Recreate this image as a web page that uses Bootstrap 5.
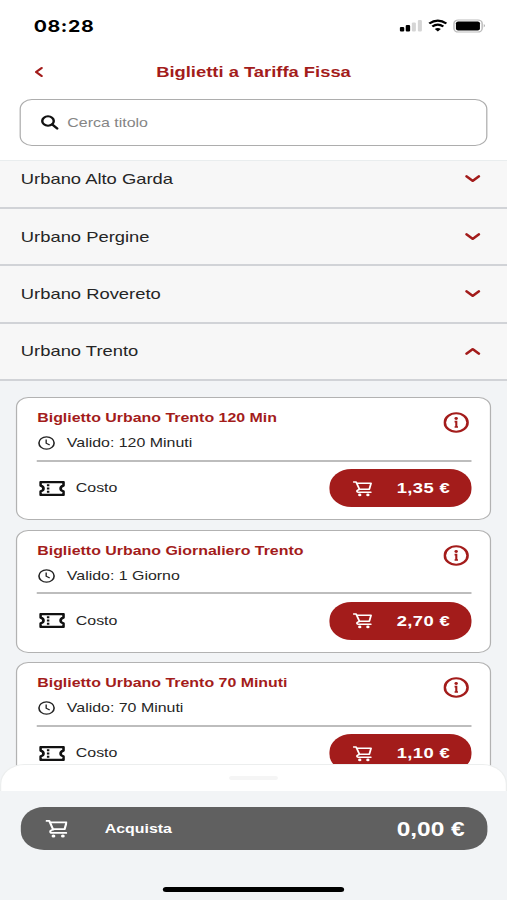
<!DOCTYPE html>
<html lang="it">
<head>
<meta charset="utf-8">
<meta name="viewport" content="width=device-width, initial-scale=1">
<title>Biglietti a Tariffa Fissa</title>
<link href="https://cdn.jsdelivr.net/npm/bootstrap@5.3.0/dist/css/bootstrap.min.css" rel="stylesheet">
<style>
  :root { --brand: #a31c1b; --canvas: #f2f4f6; }
  body { width: 507px; height: 900px; overflow: hidden; background: #fff; font-family: "Liberation Sans", Arial, sans-serif; color: #262626; }
  /* 414-unit wide phone layout widened to fill the window */
  .phone { width: 414px; height: 900px; transform: scaleX(1.22464); transform-origin: 0 0; overflow: hidden; background: var(--canvas); font-size: 13px; line-height: 16px; }
  .phone svg { display: block; flex: none; }
  .top-area { height: 161px; background: #fff; border-bottom: 1px solid #e9edee; }
  .status { height: 50px; padding: 2px 17px 0 27.5px; }
  .clock-time { font: 700 16px/20px Inter, sans-serif; letter-spacing: .5px; color: #000; }
  .title-bar { height: 44px; padding-left: 28px; padding-right: 36px; color: var(--brand); font-size: 15px; }
  .search-box { height: 47px; margin: 4.5px 16px 0; border: 1px solid #adadad; border-radius: 10px; padding-left: 16px; color: #858585; }
  .search-box span { margin-left: 7px; padding-top: 1px; }
  .scroller { height: 630px; }
  .zone { height: 57.25px; border-bottom: 2px solid #d1d3d7; background: #f7f7f7; padding: 0 21px 0 17px; font-size: 15px; color: #252525; }
  .zone.cut { height: 48px; padding-bottom: 10px; }
  .tickets { padding: 16.5px 13px 0; gap: 9.4px; }
  .ticket { height: 123px; flex: none; border: 1.5px solid #b2b2b2; border-radius: 10px; padding: 12px 15.5px 0 16.4px; }
  .ticket-name { color: var(--brand); line-height: 16px; }
  .valid-row { margin-top: 9px; gap: 9.2px; padding-left: 1px; }
  .info-mark { margin: 2px 2px 0 0; }
  .rule { height: 2px; background: #bdbdbd; margin-top: 8.5px; }
  .cost-row { margin-top: 7.5px; }
  .cost-label { gap: 9px; padding-left: 1.5px; }
  .buy { width: 116px; height: 38px; border-radius: 18px; background: var(--brand); color: #fff; font-size: 15px; letter-spacing: .3px; padding: 0 17px 0 19px; border: 0; }
  .sheet { margin-top: -27px; height: 136px; position: relative; }
  .sheet-top { height: 27px; background: #fff; border: 1px solid #eceeee; border-bottom: 0; border-radius: 20px 20px 0 0; }
  .grip { width: 40px; height: 4px; background: #f5f5f5; border-radius: 2px; }
  .sheet-body { height: 109px; background: var(--canvas); padding: 16px 16.5px 0; }
  .checkout { height: 43px; border-radius: 19px; background: #606060; color: #fff; padding: 0 18px 0 20px; border: 0; font-size: 13px; }
  .checkout-label { margin-left: 30.500px; }
  .total { font-size: 20px; }
  .home-bar { width: 148px; height: 5px; border-radius: 3px; background: #000; margin-top: 37px; }
</style>
</head>
<body>
<svg class="d-none">
  <symbol id="down" viewBox="0 0 14 10"><path d="M2 2.300 7 6.800l5-4.500" fill="none" stroke="#a31c1b" stroke-width="2.300" stroke-linecap="round" stroke-linejoin="round"/></symbol>
  <symbol id="cart" viewBox="0 0 20 20"><path d="M1 1.800h2.500L7 11.300M4.500 3.500H18.700L17 10.800H7L4.500 12.600Q4 14.800 6 14.800H18.500" fill="none" stroke="currentColor" stroke-width="1.900" stroke-linecap="round" stroke-linejoin="round"/><circle cx="7.200" cy="18.100" r="1.700" fill="currentColor"/><circle cx="15.500" cy="18.100" r="1.700" fill="currentColor"/></symbol>
  <symbol id="info" viewBox="0 0 21 21"><circle cx="10.500" cy="10.500" r="9.300" fill="none" stroke="#a31c1b" stroke-width="2.100"/><circle cx="10.500" cy="6.500" r="1.400" fill="#a31c1b"/><path d="M9.200 9.600h1.400V15M9.200 15h2.800" fill="none" stroke="#a31c1b" stroke-width="1.700"/></symbol>
  <symbol id="clock" viewBox="0 0 14 14"><circle cx="7" cy="7" r="6.200" fill="none" stroke="#222" stroke-width="1.300"/><path d="M6.700 3.500V7.300l2.900 1.600" fill="none" stroke="#222" stroke-width="1.100"/></symbol>
  <symbol id="stub" viewBox="0 0 21 15"><path d="M1.100 1.100h18.800v3.500q-2.400.7-2.400 2.900t2.400 2.900v3.500H1.100v-3.500Q3.500 9.700 3.500 7.500T1.100 4.600z" fill="none" stroke="#111" stroke-width="2.200" stroke-linejoin="round"/><path d="M7.300 3.300v2M7.300 6.500v2M7.300 9.700v2" stroke="#111" stroke-width="2"/></symbol>
</svg>
<main class="phone d-flex flex-column">
  <header class="top-area flex-shrink-0">
    <div class="status d-flex justify-content-between align-items-center">
      <span class="clock-time">08:28</span>
      <svg width="71" height="14" viewBox="0 0 71 14">
        <rect x=".5" y="8" width="3.600" height="4.500" rx="1" fill="#000"/><rect x="5.300" y="6" width="3.600" height="6.500" rx="1" fill="#000"/><rect x="10.300" y="3.500" width="3.300" height="9" rx="1" fill="#d5d5d5"/><rect x="15.200" y="1" width="3.300" height="11.500" rx="1" fill="#d5d5d5"/>
        <path d="M24.500 4.600q7-6 14 0M27 7.600q4.500-3.900 9 0" fill="none" stroke="#000" stroke-width="2"/><path d="M29 10q2.500-2 5 0l-2.500 2.500z" fill="#000"/>
        <rect x="44.700" y="1" width="23" height="12" rx="3.500" fill="none" stroke="#bbb" stroke-width="1.200"/><rect x="46.300" y="2.500" width="19.600" height="9" rx="1.800" fill="#000"/><path d="M69 5q2 1.700 0 3.500z" fill="#aaa"/>
      </svg>
    </div>
    <div class="title-bar d-flex align-items-center">
      <svg width="8" height="12" viewBox="0 0 8 12"><path d="M6 2 1.500 6 6 10" fill="none" stroke="#a31c1b" stroke-width="2" stroke-linecap="round" stroke-linejoin="round"/></svg>
      <div class="flex-fill text-center fw-bold">Biglietti a Tariffa Fissa</div>
    </div>
    <div class="search-box d-flex align-items-center">
      <svg width="15" height="15" viewBox="0 0 15 15"><circle cx="6.200" cy="6" r="4.700" fill="none" stroke="#111" stroke-width="2"/><path d="m9.700 9.500 4 4" stroke="#111" stroke-width="2.200" stroke-linecap="round"/></svg>
      <span>Cerca titolo</span>
    </div>
  </header>
  <section class="scroller flex-shrink-0 overflow-hidden">
    <div class="zone cut d-flex justify-content-between align-items-center"><span>Urbano Alto Garda</span><svg width="14" height="10"><use href="#down"/></svg></div>
    <div class="zone d-flex justify-content-between align-items-center"><span>Urbano Pergine</span><svg width="14" height="10"><use href="#down"/></svg></div>
    <div class="zone d-flex justify-content-between align-items-center"><span>Urbano Rovereto</span><svg width="14" height="10"><use href="#down"/></svg></div>
    <div class="zone d-flex justify-content-between align-items-center"><span>Urbano Trento</span><svg width="14" height="10" viewBox="0 0 14 10"><path d="M2 7.700 7 3.200l5 4.500" fill="none" stroke="#a31c1b" stroke-width="2.300" stroke-linecap="round" stroke-linejoin="round"/></svg></div>
    <div class="tickets d-flex flex-column">
      <article class="ticket bg-white">
        <div class="d-flex justify-content-between"><div><div class="ticket-name fw-bold">Biglietto Urbano Trento 120 Min</div><div class="valid-row d-flex align-items-center"><svg width="14" height="14"><use href="#clock"/></svg><span>Valido: 120 Minuti</span></div></div><svg class="info-mark" width="21" height="21"><use href="#info"/></svg></div>
        <div class="rule"></div>
        <div class="cost-row d-flex align-items-center justify-content-between"><div class="cost-label d-flex align-items-center"><svg width="21" height="15"><use href="#stub"/></svg><span>Costo</span></div><button class="buy fw-bold d-flex align-items-center justify-content-between"><svg width="16" height="17"><use href="#cart"/></svg><span>1,35 €</span></button></div>
      </article>
      <article class="ticket bg-white">
        <div class="d-flex justify-content-between"><div><div class="ticket-name fw-bold">Biglietto Urbano Giornaliero Trento</div><div class="valid-row d-flex align-items-center"><svg width="14" height="14"><use href="#clock"/></svg><span>Valido: 1 Giorno</span></div></div><svg class="info-mark" width="21" height="21"><use href="#info"/></svg></div>
        <div class="rule"></div>
        <div class="cost-row d-flex align-items-center justify-content-between"><div class="cost-label d-flex align-items-center"><svg width="21" height="15"><use href="#stub"/></svg><span>Costo</span></div><button class="buy fw-bold d-flex align-items-center justify-content-between"><svg width="16" height="17"><use href="#cart"/></svg><span>2,70 €</span></button></div>
      </article>
      <article class="ticket bg-white">
        <div class="d-flex justify-content-between"><div><div class="ticket-name fw-bold">Biglietto Urbano Trento 70 Minuti</div><div class="valid-row d-flex align-items-center"><svg width="14" height="14"><use href="#clock"/></svg><span>Valido: 70 Minuti</span></div></div><svg class="info-mark" width="21" height="21"><use href="#info"/></svg></div>
        <div class="rule"></div>
        <div class="cost-row d-flex align-items-center justify-content-between"><div class="cost-label d-flex align-items-center"><svg width="21" height="15"><use href="#stub"/></svg><span>Costo</span></div><button class="buy fw-bold d-flex align-items-center justify-content-between"><svg width="16" height="17"><use href="#cart"/></svg><span>1,10 €</span></button></div>
      </article>
    </div>
  </section>
  <footer class="sheet flex-shrink-0">
    <div class="sheet-top d-flex align-items-center justify-content-center"><div class="grip"></div></div>
    <div class="sheet-body">
      <button class="checkout w-100 fw-bold d-flex align-items-center"><svg width="18.500" height="19"><use href="#cart"/></svg><span class="checkout-label">Acquista</span><span class="total ms-auto">0,00 €</span></button>
      <div class="home-bar mx-auto"></div>
    </div>
  </footer>
</main>
<script src="https://cdn.jsdelivr.net/npm/bootstrap@5.3.0/dist/js/bootstrap.bundle.min.js"></script>
</body>
</html>
